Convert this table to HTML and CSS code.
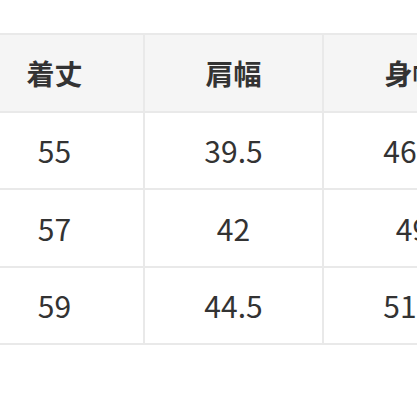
FILE: index.html
```html
<!DOCTYPE html>
<html lang="ja">
<head>
<meta charset="utf-8">
<link rel="stylesheet" href="styles.css">
</head>
<body>
<div class="wrap">
  <table class="size-table">
    <thead>
      <tr><th>着丈</th><th>肩幅</th><th>身幅</th></tr>
    </thead>
    <tbody>
      <tr><td>55</td><td>39.5</td><td>46.5</td></tr>
      <tr><td>57</td><td>42</td><td>49</td></tr>
      <tr><td>59</td><td>44.5</td><td>51.5</td></tr>
    </tbody>
  </table>
</div>
</body>
</html>
```
FILE: styles.css
```css
html, body {
  margin: 0;
  padding: 0;
  background: #ffffff;
}
.wrap {
  width: 417px;
  height: 417px;
  overflow: hidden;
  padding-top: 33px;
  box-sizing: border-box;
}
.size-table {
  margin-left: -34px;
  border-collapse: separate;
  border-spacing: 0;
  border-top: 2px solid #e9e9e9;
  table-layout: fixed;
  width: 537px;
  font-family: "Noto Sans CJK JP", "Noto Sans", sans-serif;
  color: #333333;
}
.size-table th,
.size-table td {
  width: 177px;
  height: 75.5px;
  padding: 0;
  text-align: center;
  vertical-align: middle;
  border-right: 2px solid #e9e9e9;
  border-bottom: 2px solid #e9e9e9;
  box-sizing: content-box;
  white-space: nowrap;
}
.size-table th {
  background: #f5f5f5;
  font-weight: 700;
  font-size: 28px;
}
.size-table td {
  font-weight: 400;
  font-size: 30px;
}
```
